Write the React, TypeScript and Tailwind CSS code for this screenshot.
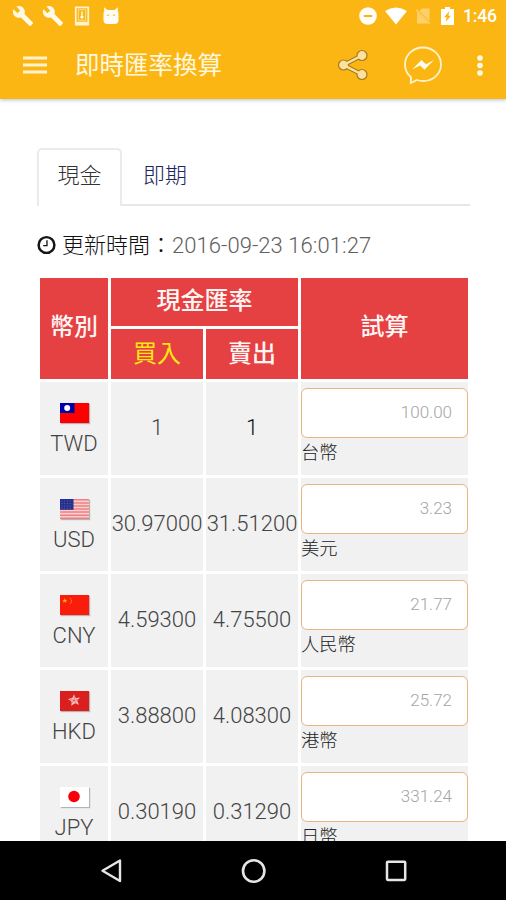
import type { ReactNode } from "react";

const wrenchPath =
  "M22.7 19l-9.1-9.1c.9-2.3.4-5-1.5-6.9-2-2-5-2.4-7.4-1.3L9 6 6 9 1.6 4.7C.4 7.1.9 10.1 2.9 12.1c1.9 1.9 4.6 2.4 6.9 1.5l9.1 9.1c.4.4 1 .4 1.4 0l2.3-2.3c.5-.4.5-1.1.1-1.4z";

function Wrench({ className }: { className: string }) {
  return (
    <svg viewBox="0 0 24 24" className={className} fill="#fff9e8">
      <path d={wrenchPath} />
    </svg>
  );
}

function StatusBar() {
  return (
    <div className="flex h-[31px] items-center pr-[9px] pl-[12px]">
      <Wrench className="h-[22px] w-[22px]" />
      <Wrench className="ml-[8px] h-[22px] w-[22px]" />
      <svg viewBox="0 0 16 20" className="ml-[10px] h-[20px] w-[16px]" fill="none">
        <path fill="#fff3d0" fillRule="evenodd" d="M.9.500h14.200v19H.9zM2.600 2.200v13.600h10.800V2.200z" />
        <path stroke="#ffe9b0" strokeWidth=".8" d="M4.300 3.700h7.400v10.600H4.300z" />
        <path stroke="#fff9e8" strokeWidth="1.500" d="M8 5.500v5.500M6.500 10.500 8 12l1.500-1.500" />
      </svg>
      <svg viewBox="0 0 16 18" className="ml-[13px] h-[18px] w-[16px]">
        <path
          fill="#fffdf6"
          d="M1 .3 4.4 3h7.2L15 .3 14.7 4q.8 1 .8 3v6q0 4-4 4h-7q-4 0-4-4V7q0-2 .8-3z"
        />
        <path stroke="#fbb615" strokeWidth="1" d="M3.800 8.200h2.400M9.800 8.200h2.400" />
      </svg>
      <div className="ml-auto flex items-center">
        <svg viewBox="0 0 18 18" className="h-[18px] w-[18px]">
          <circle cx="9" cy="9" r="8.800" fill="#fffdf6" />
          <path stroke="#fbb615" strokeWidth="2" d="M4.700 9h8.600" />
        </svg>
        <svg viewBox="0 0 22 18" className="ml-[8px] h-[18px] w-[22px]" fill="#fff">
          <path d="M0 4Q11-3 22 4L11 17.500z" />
        </svg>
        <svg viewBox="0 0 16 16" className="ml-[8px] h-[16px] w-[16px]" fill="#fdd06b">
          <path d="M4.500 3 7 .5h7.500v12.500zM2 3.500 14 15.500H2z" />
          <path stroke="#fdd06b" strokeWidth="1.300" d="M1 1.500l14 14" />
        </svg>
        <svg viewBox="0 0 13 18" className="ml-[10px] h-[18px] w-[13px]">
          <path fill="#fff" d="M4 0h5v2h4v16H0V2h4z" />
          <path fill="#fbb615" d="M8.500 4 3 10.300h2.700L4.500 15 10 8.700H7.300z" />
        </svg>
        <span className="ml-[9px] w-[34px] text-[17.5px] leading-[20px] font-medium tracking-[-0.2px] text-white">
          1:46
        </span>
      </div>
    </div>
  );
}

function AppBar() {
  return (
    <header className="relative z-10 h-[99px] shrink-0 bg-[#fcb614] shadow-[0_1px_4px_rgba(90,110,150,0.45)]">
      <StatusBar />
      <div className="flex h-[67px] items-center pl-[23px]">
        <svg viewBox="0 0 24 18" className="h-[18px] w-[24px]" stroke="#fff3cf" strokeWidth="2.800">
          <path d="M0 2h24M0 9h24M0 16h24" />
        </svg>
        <h1 className="ml-[28px] pt-[2px] text-[24.5px] leading-[36px] font-normal whitespace-nowrap text-[#fff7df]">
          即時匯率換算
        </h1>
        <svg viewBox="0 0 32 32" className="ml-auto h-[32px] w-[32px]" fill="#fbe2a0">
          <path d="M25 6.500 6.500 16 25 25.500" fill="none" stroke="#a8791b" strokeWidth="4.600" />
          <g stroke="#a8791b" strokeWidth="1.200">
            <circle cx="25" cy="6.500" r="5" />
            <circle cx="6.500" cy="16" r="5" />
            <circle cx="25" cy="25.500" r="5" />
          </g>
          <path d="M25 6.500 6.500 16 25 25.500" fill="none" stroke="#fbe2a0" strokeWidth="2.500" />
        </svg>
        <svg viewBox="0 0 38 38" className="ml-[35px] h-[38px] w-[38px]">
          <path
            fill="none"
            stroke="#fff3cd"
            strokeWidth="1.800"
            d="M7 31.200C3 28 1 23.500 1 18.500 1 9 9 1.500 19 1.500S37 9 37 18.500 29 35 19 35q-3 0-6-1L6.800 37z"
          />
          <path fill="#fffbea" d="m8 23.500 9.500-9.500 4.500 4.300 8-4.300-9.500 9.800-4.500-4.400z" />
        </svg>
        <svg viewBox="0 0 6 22" className="mt-[2px] mr-[23px] ml-[35px] h-[22px] w-[6px]" fill="#fffbea">
          <circle cx="3" cy="3" r="2.800" />
          <circle cx="3" cy="10.500" r="2.800" />
          <circle cx="3" cy="18" r="2.800" />
        </svg>
      </div>
    </header>
  );
}

function Flag({ code }: { code: string }) {
  const art: Record<string, ReactNode> = {
    TWD: (
      <>
        <path fill="#fe0000" d="M0 0h29v20H0z" />
        <path fill="#0000a8" d="M0 0h14.500v10H0z" />
        <circle cx="7.200" cy="5" r="3" fill="#fff" />
      </>
    ),
    USD: (
      <>
        <path fill="#fbd0d0" d="M0 0h29v20H0z" />
        <path
          stroke="#f07f82"
          strokeWidth="1.500"
          d="M0 .8h29M0 3.900h29M0 6.900h29M0 10h29M0 13.100h29M0 16.200h29M0 19.200h29"
        />
        <path fill="#252f8c" d="M0 0h13.500v10.800H0z" />
        <path stroke="#6670b8" strokeWidth=".8" strokeDasharray="1 1.700" d="M1.500 2h11M1.500 4.500h11M1.500 7h11M1.500 9.200h11" />
      </>
    ),
    CNY: (
      <>
        <path fill="#fa1d0c" d="M0 0h29v20H0z" />
        <path fill="#ffb400" d="m4.800 3 .7 1.900h2L5.900 6.100l.6 1.900-1.700-1.200L3.100 8l.6-1.900L2.100 4.900h2z" />
        <path fill="none" stroke="#ff9a00" strokeDasharray="1.600 .8" d="M10 3q3 3 0 6" />
      </>
    ),
    HKD: (
      <>
        <path fill="#d9201f" d="M0 0h29v20H0z" />
        <path fill="#f8c5c2" d="m14 3.500 1.900 3.700 4-.6-2.700 3.200 1.700 4-4-1.600-3.500 2.600.1-4.400L8 8l4.300-.9z" />
        <path fill="none" stroke="#d9201f" strokeWidth=".5" d="m14 9.500.5-4M14 9.500l4-1M14 9.500l2.500 3M14 9.500l-2.500 3M14 9.500l-4-1" />
      </>
    ),
    JPY: (
      <>
        <path fill="#fff" d="M0 0h29v20H0z" />
        <circle cx="14" cy="9.500" r="5.800" fill="#f90008" />
      </>
    ),
  };
  return (
    <svg viewBox="0 0 29 20" className="h-[20px] w-[29px] shadow-[1px_1px_1px_rgba(0,0,0,0.25)]">
      {art[code]}
    </svg>
  );
}

const rates = [
  { code: "TWD", buy: "1", sell: "1", amount: "100.00", name: "台幣" },
  { code: "USD", buy: "30.97000", sell: "31.51200", amount: "3.23", name: "美元" },
  { code: "CNY", buy: "4.59300", sell: "4.75500", amount: "21.77", name: "人民幣" },
  { code: "HKD", buy: "3.88800", sell: "4.08300", amount: "25.72", name: "港幣" },
  { code: "JPY", buy: "0.30190", sell: "0.31290", amount: "331.24", name: "日幣" },
];

const columns = "grid grid-cols-[68px_92px_92px_167px] gap-[3px]";
const headCell = "flex items-center justify-center bg-[#e54042]";
const rateCell = "flex items-center justify-center bg-[#f1f1f1] pb-[3px] whitespace-nowrap";

function RateTable() {
  return (
    <section className="ml-[40px] w-[428px]">
      <div
        className={`${columns} grid-rows-[48px_50px] text-[24px] leading-[30px] font-medium text-[#fff5f3]`}
      >
        <div className={`${headCell} row-span-2 pb-[4px]`}>幣別</div>
        <div className={`${headCell} col-span-2 pb-[2px]`}>現金匯率</div>
        <div className={`${headCell} row-span-2 pb-[4px]`}>試算</div>
        <div className={`${headCell} font-normal text-[#ffe712]`}>買入</div>
        <div className={headCell}>賣出</div>
      </div>
      {rates.map((r) => (
        <div key={r.code} className={`${columns} mt-[3px] h-[93px] text-[22px] font-light text-[#444]`}>
          <div className="flex flex-col items-center bg-[#f1f1f1] pt-[21px]">
            <Flag code={r.code} />
            <span className="mt-[8px] leading-[26px]">{r.code}</span>
          </div>
          <div className={rateCell}>{r.buy}</div>
          <div className={`${rateCell} ${r.code === "TWD" ? "text-[#111]" : ""}`}>{r.sell}</div>
          <div className="bg-[#f1f1f1] pt-[6px]">
            <div className="flex h-[50px] items-center justify-end rounded-[6px] border-[1.5px] border-[#e8b482] bg-white pr-[15px] pb-[1px] text-[17px] text-[#a5a5a5]">
              {r.amount}
            </div>
            <div className="mt-[3px] text-[18.3px] leading-[24px] text-[#222]">{r.name}</div>
          </div>
        </div>
      ))}
    </section>
  );
}

function NavBar() {
  return (
    <nav className="relative z-10 flex h-[59px] shrink-0 items-center bg-black">
      <svg viewBox="0 0 22 26" className="ml-[100px] h-[26px] w-[22px]" fill="none" stroke="#e6e6e6" strokeWidth="2.400">
        <path strokeLinejoin="round" d="M20 2.500v20.500L2.500 12.800z" />
      </svg>
      <svg viewBox="0 0 26 26" className="ml-[119px] h-[26px] w-[26px]" fill="none" stroke="#e6e6e6" strokeWidth="2.600">
        <circle cx="12.700" cy="13" r="10.700" />
      </svg>
      <svg viewBox="0 0 22 22" className="ml-[118px] h-[22px] w-[22px]" fill="none" stroke="#e6e6e6" strokeWidth="2.500">
        <rect x="2" y="1.700" width="18.200" height="18.200" rx=".8" />
      </svg>
    </nav>
  );
}

export default function App() {
  return (
    <div className="flex h-[900px] w-[506px] flex-col overflow-hidden bg-white font-[Roboto,'Noto_Sans_CJK_TC',sans-serif]">
      <AppBar />
      <main className="min-h-0 flex-1 overflow-hidden pt-[49px]">
        <div className="ml-[37px] flex h-[58px] w-[433px] text-[22px] leading-[30px] font-light">
          <div className="w-[85px] rounded-t-[5px] border-2 border-b-0 border-[#ebebeb] pt-[11px] text-center text-[#333]">
            現金
          </div>
          <div className="flex-1 border-b-2 border-[#e7e7e7] pt-[13px] pl-[21px] text-[#1c255c]">即期</div>
        </div>
        <div className="mt-[24px] ml-[37px] flex h-[30px] items-center text-[22px] leading-[30px] font-light whitespace-nowrap">
          <svg viewBox="0 0 20 20" className="mr-[6px] h-[20px] w-[19px] shrink-0" fill="none" stroke="#151515">
            <circle cx="10" cy="10" r="8.300" strokeWidth="2.600" />
            <path d="M10.500 5v5.700H6.500" strokeWidth="1.400" />
          </svg>
          <span className="pt-[2px] text-[#111]">更新時間：</span>
          <span className="pt-[2px] tracking-[0.06px] text-[#606060]">2016-09-23 16:01:27</span>
        </div>
        <div className="mt-[18px]">
          <RateTable />
        </div>
      </main>
      <NavBar />
    </div>
  );
}
